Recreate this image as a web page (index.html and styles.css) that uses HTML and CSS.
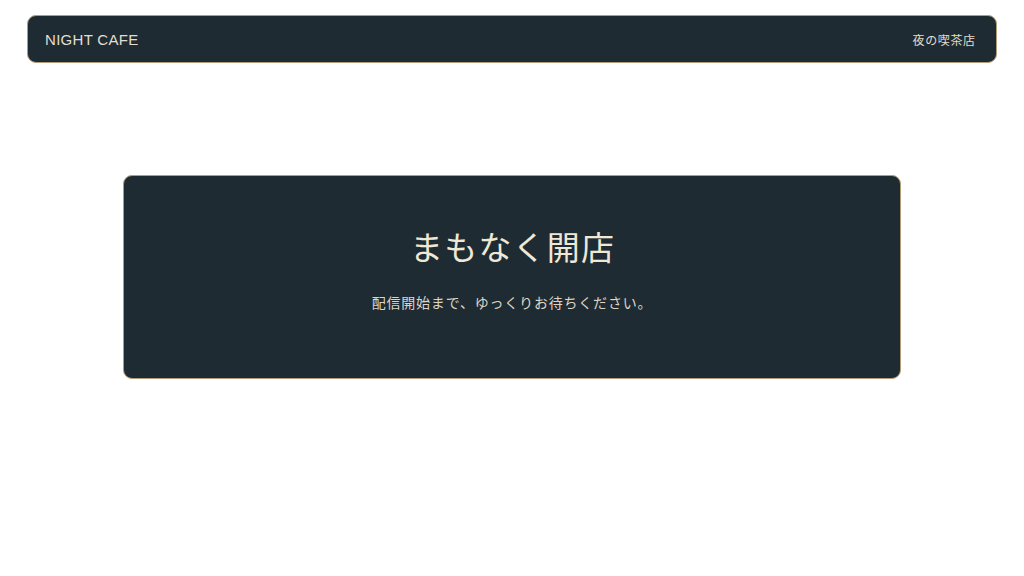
FILE: index.html
```html
<!DOCTYPE html>
<html lang="ja">
<head>
<meta charset="utf-8">
<title>NIGHT CAFE</title>
<link rel="stylesheet" href="styles.css">
</head>
<body>
<header class="site-header">
  <div class="brand">NIGHT CAFE</div>
  <div class="brand-ja">夜の喫茶店</div>
</header>
<main class="main">
  <section class="notice">
    <h1 class="notice-title">まもなく開店</h1>
    <p class="notice-text">配信開始まで、ゆっくりお待ちください。</p>
  </section>
</main>
</body>
</html>
```
FILE: styles.css
```css
html, body {
  margin: 0;
  padding: 0;
  background: #ffffff;
}
body {
  font-family: "Liberation Sans", "Noto Sans CJK JP", sans-serif;
  padding: 15px 27px 0;
}
.site-header {
  height: 46px;
  display: flex;
  align-items: center;
  justify-content: space-between;
  padding: 0 21px 0 17px;
  background: #1f2b33;
  border: 1px solid #b39d78;
  border-radius: 9px;
  color: #e4ddcf;
}
.brand {
  font-size: 15px;
  letter-spacing: 0.3px;
}
.brand-ja {
  font-family: "Noto Sans CJK JP", sans-serif;
  font-size: 12px;
  letter-spacing: 0.05em;
  margin-right: -0.6px;
}
.main {
  display: flex;
  justify-content: center;
  padding-top: 112px;
}
.notice {
  width: 776px;
  background: #1f2b33;
  border: 1px solid #b39d78;
  border-radius: 9px;
  padding: 46px 0 65px;
  text-align: center;
  font-family: "Noto Sans CJK JP", sans-serif;
  letter-spacing: 0.05em;
}
.notice-title {
  margin: 0;
  font-size: 33px;
  font-weight: 400;
  line-height: 48px;
  letter-spacing: 1.2px;
  text-indent: 1.2px;
  color: #f0e8d6;
}
.notice-text {
  margin: 21px 0 0;
  font-size: 14px;
  line-height: 22px;
  color: #ddd5c6;
}
```
